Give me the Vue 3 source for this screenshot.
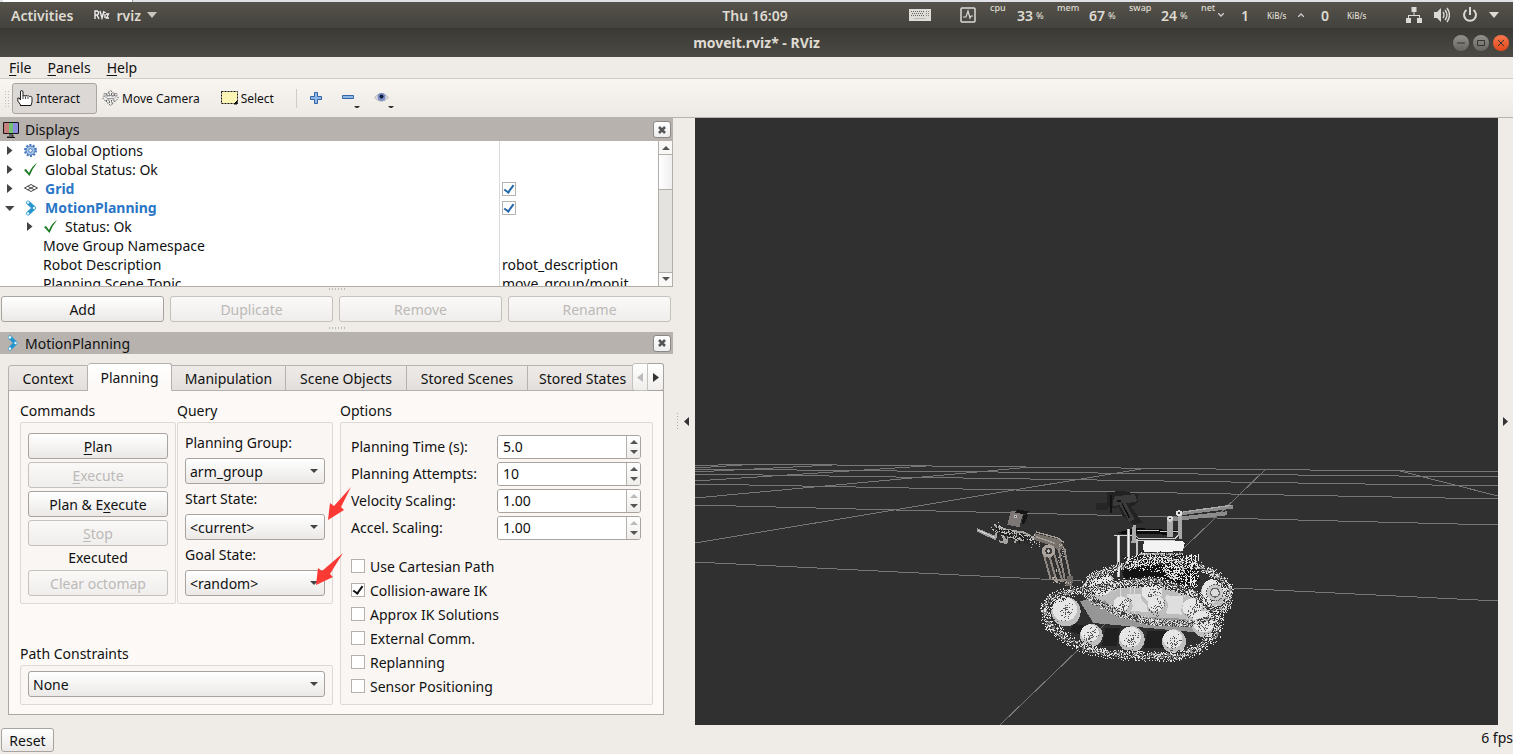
<script setup>
import { ref } from 'vue'

const menus = [['F', 'ile'], ['P', 'anels'], ['H', 'elp']]
const tree = [
  { label: 'Global Options', level: 1, arrow: 'right', icon: 'gear' },
  { label: 'Global Status: Ok', level: 1, arrow: 'right', icon: 'tick' },
  { label: 'Grid', level: 1, arrow: 'right', icon: 'grid', blue: true, check: true },
  { label: 'MotionPlanning', level: 1, arrow: 'down', icon: 'arm', blue: true, check: true },
  { label: 'Status: Ok', level: 2, arrow: 'right', icon: 'tick' },
  { label: 'Move Group Namespace', level: 3, value: '' },
  { label: 'Robot Description', level: 3, value: 'robot_description' },
  { label: 'Planning Scene Topic', level: 3, value: 'move_group/monit' }
]
const displayButtons = [['Add', true], ['Duplicate', false], ['Remove', false], ['Rename', false]]
const tabs = ['Context', 'Planning', 'Manipulation', 'Scene Objects', 'Stored Scenes', 'Stored States']
const activeTab = ref('Planning')
const queries = [
  { id: 'group', label: 'Planning Group:', value: 'arm_group' },
  { id: 'start', label: 'Start State:', value: '<current>' },
  { id: 'goal', label: 'Goal State:', value: '<random>' }
]
const spins = [
  { id: 'time', label: 'Planning Time (s):', value: '5.0', max: false },
  { id: 'attempts', label: 'Planning Attempts:', value: '10', max: false },
  { id: 'velocity', label: 'Velocity Scaling:', value: '1.00', max: true },
  { id: 'accel', label: 'Accel. Scaling:', value: '1.00', max: true }
]
const options = ref([
  { label: 'Use Cartesian Path', on: false },
  { label: 'Collision-aware IK', on: true },
  { label: 'Approx IK Solutions', on: false },
  { label: 'External Comm.', on: false },
  { label: 'Replanning', on: false },
  { label: 'Sensor Positioning', on: false }
])

const gridLines = [
  'M695 562L1081 581', 'M1233 588L1498 601', 'M695 505L1498 525', 'M695 484L1498 499',
  'M695 474L1498 486', 'M695 469L1498 477', 'M742 464L1498 472', 'M695 466L742 464',
  'M695 543L1141 469', 'M695 498L1031 467', 'M695 481L926 466', 'M695 472L832 465',
  'M695 468L758 464', 'M1265 470L1000 725', 'M1400 471L1498 496'
]

// Scatters 3-unit squares along a polyline to give a track its studded texture.
function scatter(points, spread, count, seed) {
  let s = seed * 7919
  const rnd = () => (s = (s * 16807) % 2147483647) / 2147483647
  const lens = []
  let total = 0
  for (let i = 1; i < points.length; i++) {
    const l = Math.hypot(points[i][0] - points[i - 1][0], points[i][1] - points[i - 1][1])
    lens.push(l)
    total += l
  }
  let d = ''
  for (let n = 0; n < count; n++) {
    let t = rnd() * total
    let i = 0
    while (i < lens.length - 1 && t > lens[i]) t -= lens[i++]
    const [x0, y0] = points[i]
    const [x1, y1] = points[i + 1]
    const k = t / lens[i]
    const x = Math.round((x0 + (x1 - x0) * k + (rnd() - 0.5) * spread) / 3) * 3
    const y = Math.round((y0 + (y1 - y0) * k + (rnd() - 0.5) * spread) / 3) * 3
    d += `M${x} ${y}h3v3h-3z`
  }
  return d
}
const nearTrack = [[380, 355], [320, 368], [270, 385], [252, 420], [265, 460], [310, 500], [380, 537], [450, 552], [560, 558], [650, 560], [715, 535], [765, 495], [778, 450], [745, 405], [700, 370], [650, 348], [580, 332], [480, 340], [380, 360]]
const farTrack = [[375, 350], [400, 318], [470, 292], [560, 272], [640, 268], [720, 290], [775, 318], [808, 360], [803, 400], [780, 425]]
const sagTrack = [[370, 365], [420, 402], [490, 434], [560, 452], [640, 460], [700, 458], [770, 440]]
const clusters = [
  [[500, 275], [690, 300]], [[530, 260], [700, 270]], [[700, 290], [690, 340]], [[620, 300], [680, 320]]
]
const pathOf = pts => 'M' + pts.map(p => p.join(' ')).join('L')
const wheels = [
  [318, 425, 44], [428, 350, 42], [488, 408, 30], [580, 372, 38], [592, 408, 32], [700, 420, 36],
  [394, 496, 34], [515, 508, 39], [642, 514, 36], [645, 296, 32], [735, 462, 40], [765, 368, 42]
]
</script>

<template>
  <div class="desktop">
    <div class="strip"><i></i></div>
    <header class="topbar">
      <div class="top-left">
        <button class="plain">Activities</button>
        <button class="plain app">
          <svg width="16" height="12" viewBox="0 0 16 12" fill="none" stroke="#eee" stroke-width="1.4"><path d="M1 10V2h2.500q2 1.800 0 4H1M3 6l2 4M6 2l2 7 2-7M11 5v4M12 5h2.500l-2 4H15M11 3v1" /></svg>
          rviz
          <svg width="10" height="6" viewBox="0 0 10 6"><path d="M0 0h10L5 6z" fill="#c9c6bf" /></svg>
        </button>
      </div>
      <time>Thu 16:09</time>
      <div class="top-right">
        <svg class="kbd" width="22" height="14" viewBox="0 0 22 14"><path d="M0 1h22v12H0z" fill="#dedcd7" /><path d="M2 3.500h13M3 5.500h12M2 7.500h13" stroke="#66645f" stroke-dasharray="1 1" /><path d="M17 3.500h3M17 5.500h3M17 7.500h3" stroke="#8b8984" stroke-dasharray="1 1" /><path d="M5 10.500h11" stroke="#bbb" /></svg>
        <svg class="load" width="16" height="16" viewBox="0 0 16 16" fill="none" stroke="#dcdad5" stroke-width="1.500"><rect x="1" y="1" width="14" height="14" rx="1" /><path d="M3 10h3l2-6 2 7 1-2h2" stroke-width="1.200" /></svg>
        <span class="lab cpu">cpu</span><b>33</b><small class="u1">%</small>
        <span class="lab mem">mem</span><b>67</b><small class="u1">%</small>
        <span class="lab swap">swap</span><b>24</b><small class="u1">%</small>
        <span class="lab net">net</span>
        <span class="dir"><svg width="6" height="4" viewBox="0 0 6 4"><path d="M0 0l3 3 3-3" fill="none" stroke="#ccc" stroke-width="1.300" /></svg></span>
        <b class="rate">1</b><small class="u2">KiB/s</small>
        <span class="dir"><svg width="6" height="4" viewBox="0 0 6 4"><path d="M0 4l3-3 3 3" fill="none" stroke="#ccc" stroke-width="1.300" /></svg></span>
        <b class="rate">0</b><small class="u3">KiB/s</small>
        <svg class="sys" width="16" height="16" viewBox="0 0 16 16" fill="#dcdad5"><path d="M5.500 0h5v5h-2v3H14v3h2v5h-5v-5h2V9H3v2h2v5H0v-5h2V8h5.500V5h-2z" /></svg>
        <svg class="sys" width="16" height="16" viewBox="0 0 16 16"><path d="M0 5h3l4-4v14l-4-4H0z" fill="#dcdad5" /><path d="M9 5q2 3 0 6M11 3q4 5 0 10M13 1q5 7 0 14" fill="none" stroke="#dcdad5" stroke-width="1.400" /></svg>
        <svg class="pow" width="16" height="16" viewBox="0 0 16 16" fill="none" stroke="#dcdad5" stroke-width="2"><path d="M4.500 3a6 6 0 1 0 7 0M8 0v8" /></svg>
        <svg width="10" height="6" viewBox="0 0 10 6"><path d="M0 0h10L5 6z" fill="#dcdad5" /></svg>
      </div>
    </header>
    <div class="titlebar">
      <span></span>
      <h1>moveit.rviz* - RViz</h1>
      <div class="winbtns">
        <button aria-label="Minimize"><svg viewBox="0 0 16 16"><path d="M4 8h8" /></svg></button>
        <button aria-label="Maximize"><svg viewBox="0 0 16 16"><path d="M4.500 5.500h7v5h-7z" /></svg></button>
        <button class="close" aria-label="Close window"><svg viewBox="0 0 16 16"><path d="M5 5l6 6M11 5l-6 6" /></svg></button>
      </div>
    </div>
    <nav class="menu">
      <button v-for="m in menus" :key="m[1]" class="plain"><u>{{ m[0] }}</u>{{ m[1] }}</button>
    </nav>
    <div class="toolbar">
      <i class="grip"></i>
      <button class="tool on">
        <svg width="16" height="16" viewBox="0 0 16 16"><path d="M3.500 10V2q0-1.500 1.200-1.500T6 2v4q1-1 2 0 1-1 2.200 0 1-.8 2.200.5 1.600-.7 2.600.8V12l-1 3.500H4L.8 11V8q1.500-1 2.700 2" fill="#fff" stroke="#222" /><path d="M6 6v3M8.500 6.500V9M11 7v2" stroke="#444" /><path d="M3 15.500h11" stroke="#111" /></svg>
        Interact
      </button>
      <button class="tool">
        <svg width="17" height="16" viewBox="0 0 17 16" fill="#eee" stroke="#666"><path d="M8.500.500L11.500 3h-2v3h3V4L16.500 8l-4 4v-2h-3v3h2l-3 2.500-3-2.500h2v-3h-3v2L.5 8l4-4v2h3V3h-2z" stroke-dasharray="2 1" /><path d="M2 3.500h3v2h7v-2h3v2l-3 3H5l-3-3z" fill="none" stroke="#888" stroke-width=".8" /></svg>
        Move Camera
      </button>
      <button class="tool select-tool">
        <svg width="17" height="14" viewBox="0 0 17 14"><path d="M.5.500h16v12H.500z" fill="#fdf5b5" stroke="#111" stroke-dasharray="2 1" /><path d="M13 13l3-3v3z" fill="#111" stroke="#111" /></svg>
        Select
      </button>
      <i class="sep"></i>
      <button class="tool ic" aria-label="Add tool"><svg width="12" height="12" viewBox="0 0 12 12"><path d="M4.500.5h3v4h4v3h-4v4h-3v-4h-4v-3h4z" fill="#8fb8e6" stroke="#3465a4" /></svg></button>
      <button class="tool ic drop" aria-label="Remove tool"><svg width="18" height="20" viewBox="0 0 18 20"><path d="M.5 7.500h11v3H.500z" fill="#8fb8e6" stroke="#3465a4" /><path d="M12 18h6l-3 3z" fill="#333" /></svg></button>
      <button class="tool ic drop" aria-label="Visibility"><svg width="20" height="20" viewBox="0 0 20 20"><path d="M.5 9.500q7-8 14 0-7 7.500-14 0z" fill="#e4e4e4" stroke="#b5b5b5" /><circle cx="7.500" cy="9" r="4" fill="#7c8fc6" /><circle cx="7.500" cy="8.500" r="2" fill="#131b3c" /><path d="M14 18h6l-3 3z" fill="#333" /></svg></button>
    </div>

    <main>
      <section class="left">
        <div class="dock-title">
          <svg width="18" height="18" viewBox="0 0 18 18"><path d="M2 2h5v10H2z" fill="#c97e7e" /><path d="M7 2h4v10H7z" fill="#72c274" /><path d="M11 2h5v10h-5z" fill="#8b8bdc" /><path d="M1.500 1.500h15v11h-15zM7 14h4v2H5M5 16.500h8" fill="none" stroke="#151515" /></svg>
          <h2>Displays</h2>
          <button class="x" aria-label="Close Displays"><svg width="8" height="8" viewBox="0 0 8 8"><path d="M1 1l6 6M7 1L1 7" stroke="#555" stroke-width="2.600" /></svg></button>
        </div>
        <div class="tree-wrap">
          <div class="tree" role="tree">
            <div v-for="r in tree" :key="r.label" class="row" role="treeitem">
              <div class="name" :class="['l' + r.level, { blue: r.blue }]">
                <svg v-if="r.arrow === 'right'" class="tw" width="10" height="10" viewBox="0 0 10 10"><path d="M2 0v9l5.500-4.500z" fill="#444" /></svg>
                <svg v-else-if="r.arrow === 'down'" class="tw" width="10" height="10" viewBox="0 0 10 10"><path d="M0 3h9.500L4.700 8z" fill="#444" /></svg>
                <svg v-if="r.icon === 'gear'" class="ti" viewBox="0 0 16 16" fill="none"><circle cx="7.500" cy="7.500" r="5.500" stroke="#4877b8" stroke-width="2" stroke-dasharray="2 1.450" /><circle cx="7.500" cy="7.500" r="4.500" fill="#a9c6ea" stroke="#4877b8" /><circle cx="7.500" cy="7.500" r="1.800" fill="#fff" stroke="#4877b8" /></svg>
                <svg v-else-if="r.icon === 'tick'" class="ti" viewBox="0 0 16 16"><path d="M1 8l2-1 3 4Q9 4 14 1 9 7 6.500 14z" fill="#197a22" /></svg>
                <svg v-else-if="r.icon === 'grid'" class="ti" viewBox="0 0 16 16" fill="none" stroke="#444"><path d="M1.500 7L8 3.500 14.500 7 8 10.500zM4.700 5.300l6.600 3.500M11.300 5.300L4.700 8.800" /></svg>
                <svg v-else-if="r.icon === 'arm'" class="ti" viewBox="0 0 16 16"><path d="M5 2.500L11 8l-6 5.500" fill="none" stroke="#2494cf" stroke-width="3.800" stroke-linecap="round" stroke-linejoin="round" /><g fill="#e8f7ff"><circle cx="5" cy="2.500" r="1.300" /><circle cx="11" cy="8" r="1.200" /><circle cx="5" cy="13.500" r="1.300" /></g></svg>
                <span>{{ r.label }}</span>
              </div>
              <div class="val">
                <input v-if="r.check" type="checkbox" class="box bluebox" checked :aria-label="r.label" />
                <template v-else>{{ r.value }}</template>
              </div>
            </div>
          </div>
          <div class="scroll">
            <button aria-label="Scroll up"><svg width="8" height="5" viewBox="0 0 8 5"><path d="M0 5h8L4 1z" fill="#555" /></svg></button>
            <i class="thumb"></i><i class="trough"></i>
            <button aria-label="Scroll down"><svg width="8" height="5" viewBox="0 0 8 5"><path d="M0 0h8L4 4z" fill="#555" /></svg></button>
          </div>
        </div>
        <i class="hdots"></i>
        <div class="btnrow">
          <button v-for="b in displayButtons" :key="b[0]" class="btn" :disabled="!b[1]">{{ b[0] }}</button>
        </div>
        <i class="hdots second"></i>
        <div class="dock-title motion">
          <svg width="18" height="18" viewBox="0 0 16 16"><path d="M7 3l5 5-5 5" fill="none" stroke="#2494cf" stroke-width="3.400" stroke-linecap="round" stroke-linejoin="round" /><g fill="#e8f7ff"><circle cx="7" cy="3" r="1.200" /><circle cx="12" cy="8" r="1.100" /><circle cx="7" cy="13" r="1.200" /></g></svg>
          <h2>MotionPlanning</h2>
          <button class="x" aria-label="Close MotionPlanning"><svg width="8" height="8" viewBox="0 0 8 8"><path d="M1 1l6 6M7 1L1 7" stroke="#555" stroke-width="2.600" /></svg></button>
        </div>
        <div class="motion-body">
          <div class="tabs" role="tablist">
            <button v-for="t in tabs" :key="t" role="tab" class="tab" :class="{ active: t === activeTab }" :aria-selected="t === activeTab" @click="activeTab = t">{{ t }}</button>
            <button class="nav first" disabled aria-label="Scroll tabs left"><svg width="6" height="9" viewBox="0 0 6 9"><path d="M6 0v9L0 4.500z" fill="#bbb" /></svg></button>
            <button class="nav" aria-label="Scroll tabs right"><svg width="6" height="9" viewBox="0 0 6 9"><path d="M0 0v9l6-4.500z" fill="#333" /></svg></button>
          </div>
          <div class="pane">
            <div class="columns">
              <div class="col-left">
                <div class="pair">
                  <section>
                    <h3>Commands</h3>
                    <div class="frame commands">
                      <button class="btn"><u>P</u>lan</button>
                      <button class="btn" disabled><u>E</u>xecute</button>
                      <button class="btn">Plan &amp; E<u>x</u>ecute</button>
                      <button class="btn" disabled><u>S</u>top</button>
                      <output>Executed</output>
                      <button class="btn" disabled>Clear octomap</button>
                    </div>
                  </section>
                  <section>
                    <h3>Query</h3>
                    <div class="frame query">
                      <template v-for="q in queries" :key="q.id">
                        <label :for="q.id">{{ q.label }}</label>
                        <div class="combo"><select :id="q.id"><option>{{ q.value }}</option></select></div>
                      </template>
                    </div>
                  </section>
                </div>
                <section>
                  <h3><label for="constraints">Path Constraints</label></h3>
                  <div class="frame constraints">
                    <div class="combo"><select id="constraints"><option>None</option></select></div>
                  </div>
                </section>
              </div>
              <section class="opts">
                <h3>Options</h3>
                <div class="frame options">
                  <div v-for="s in spins" :key="s.id" class="spinrow">
                    <label :for="s.id">{{ s.label }}</label>
                    <div class="spin">
                      <input :id="s.id" type="text" :value="s.value" />
                      <div class="steps">
                        <button :disabled="s.max" :aria-label="'Increase ' + s.label"><svg width="8" height="5" viewBox="0 0 8 5"><path d="M0 5h8L4 1z" fill="currentColor" /></svg></button>
                        <button :aria-label="'Decrease ' + s.label"><svg width="8" height="5" viewBox="0 0 8 5"><path d="M0 0h8L4 4z" fill="currentColor" /></svg></button>
                      </div>
                    </div>
                  </div>
                  <div class="checks">
                    <label v-for="o in options" :key="o.label"><input v-model="o.on" type="checkbox" class="box" />{{ o.label }}</label>
                  </div>
                </div>
              </section>
            </div>
            <svg class="arrow a1" width="24" height="34" viewBox="0 0 24 34"><path d="M0 33L2 16l4 3L23 0 13 20l3 3z" fill="#fb3a36" /></svg>
            <svg class="arrow a2" width="28" height="32" viewBox="0 0 28 32"><path d="M0 32L2 15l4 3L27 0 14 21l3 3z" fill="#fb3a36" /></svg>
          </div>
        </div>
      </section>

      <div class="gutter"><i class="vdots"></i><svg width="5" height="9" viewBox="0 0 5 9"><path d="M5 0v9L0 4.500z" fill="#333" /></svg></div>
      <div class="view">
        <svg viewBox="695 118 803 607" preserveAspectRatio="xMidYMid slice" shape-rendering="crispEdges" aria-label="3D view">
          <path v-for="g in gridLines" :key="g" :d="g" stroke="#777" fill="none" />
          <svg x="960" y="470" width="290" height="210" viewBox="0 0 870 630">
            <!-- arm -->
            <path d="M52 175l58 24-2 12-58-26z" fill="#9c9c9c" />
            <path d="M54 180l55 25" stroke="#d4d4d4" stroke-width="3" />
            <path d="M152 124l40-4-14 52-36-8z" fill="#7d7875" />
            <path d="M172 118l34 6-6 10-34-6zM190 134l14 2-12 26-6 0z" fill="#151515" />
            <circle cx="166" cy="140" r="5" fill="#bbb" /><circle cx="166" cy="140" r="2" fill="#333" />
            <path d="M102 165l40 15 52 8 30 18M112 180l-6 26M130 182l4 40M126 196l16 20M146 184l-6 36M170 186l-4 32M118 214l24 4M150 200l44 12" stroke="#a5a3a0" stroke-width="6" fill="none" />
            <path d="M108 172l28 26M140 190l30 16M178 196l20 14M150 180l6 14" stroke="#1c1c1c" stroke-width="5" fill="none" />
            <path :d="scatter([[105, 168], [150, 195], [210, 200], [225, 222]], 26, 110, 17)" fill="#c8c6c2" />
            <path :d="scatter([[105, 175], [150, 200], [215, 212]], 28, 70, 99)" fill="#1a1a1a" />
            <path d="M225 190l72 18 16 22-14 14-22-16-54-18z" fill="#77716c" />
            <path d="M228 186l66 18 18 14M228 200l56 20" stroke="#a69f98" stroke-width="4" fill="none" />
            <path d="M254 258l18 68 20 14-20-88z" fill="#3c3a39" />
            <path d="M252 256l20 72M268 258l20 70M282 250l26 86M296 236l18 90M312 234l18 84M276 328l50 4" stroke="#8d8680" stroke-width="6" fill="none" />
            <circle cx="266" cy="243" r="20" fill="#aaa39d" /><circle cx="266" cy="243" r="10" fill="#3c3b3a" /><circle cx="266" cy="243" r="5" fill="#bbb" />
            <path d="M322 318h18l-4 32-20-4z" fill="#6d6864" />
            <path :d="scatter([[296, 215], [310, 240], [280, 330], [330, 340]], 14, 60, 5)" fill="#b5afa8" />
            <!-- camera head -->
            <path d="M408 98h36v22h-36z" fill="#262626" />
            <path d="M442 68l38-6 56 10-4 26-18 14 34 46-26 6-34-26-12-28-14 6-22-8z" fill="#222" />
            <path d="M462 80l62-8 8 22-34 6 26 48-16 8-30-52-20 6z" fill="#3b3b3b" />
            <path d="M452 76v54M486 100l22 44M470 92h14" stroke="#121212" stroke-width="5" />
            <!-- deck and exhausts -->
            <path d="M462 190l68-16 136 8-40 12z" fill="#0c0c0c" />
            <path d="M462 196h64l10 10h108l22-22M530 180l136 6M526 210h120" stroke="#d2d2d2" stroke-width="3" fill="none" />
            <path d="M660 128l158-24v12l-158 20zM636 142l164-18v12l-164 18z" fill="#8b8b8b" />
            <path d="M668 126l146-20" stroke="#aaa" stroke-width="4" />
            <path d="M622 142h18v60h-18zM652 126h14v82h-10zM518 166h10v54h-14z" fill="#a9a9a9" />
            <circle cx="630" cy="146" r="9" fill="#d5d5d5" /><circle cx="657" cy="130" r="9" fill="#e4e4e4" />
            <circle cx="630" cy="146" r="3" fill="#333" /><circle cx="657" cy="130" r="3" fill="#333" />
            <path d="M472 194h9v128h-9zM501 176h8v148h-8zM527 206h7v116h-7z" fill="#c5c5c5" />
            <path d="M474 194v128M504 176v148" stroke="#f4f4f4" stroke-width="3" />
            <path d="M552 214h116l6 6-6 24-114 2-6-8z" fill="#f3f3f3" />
            <path d="M540 252h130" stroke="#a0a0a0" stroke-width="5" />
            <!-- chassis -->
            <path d="M480 285h210l30 45-50 20H500z" fill="#141414" />
            <path d="M360 395l60-20 330 60-20 54-330-30z" fill="#969696" />
            <path d="M420 380l60-28 120-10 100 40 50 45-60 20-130-6-100-28z" fill="#bcbcbc" />
            <path d="M500 372l170 6-4 56-160-12z" fill="#dedede" />
            <path d="M340 462l34 4-14 28-30-10zM436 474h44l-10 54h-44zM562 482h56l-6 52h-60z" fill="#202020" />
            <path d="M480 336v60M522 326v116M510 320v50" stroke="#d9d9d9" stroke-width="3" />
            <g v-for="(w, i) in wheels" :key="i">
              <ellipse :cx="w[0]" :cy="w[1]" :rx="w[2]" :ry="w[2]" fill="#bebebe" />
              <ellipse :cx="w[0] - 4" :cy="w[1] - 7" :rx="w[2] - 7" :ry="w[2] - 8" fill="#e6e6e6" />
              <path :d="scatter([[w[0] - 14, w[1] + 18], [w[0] + 12, w[1] - 18]], 28, 44, 31 + i * 57)" fill="#555" />
            </g>
            <circle cx="765" cy="368" r="25" fill="#c9c9c9" stroke="#555" stroke-width="3" stroke-dasharray="5 3" />
            <circle cx="765" cy="368" r="13" fill="#ddd" stroke="#666" stroke-width="4" />
            <!-- tracks -->
            <g fill="none" stroke-linejoin="round">
              <path :d="pathOf(farTrack)" stroke="#8e8e8e" stroke-width="17" />
              <path :d="pathOf(sagTrack)" stroke="#9d9d9d" stroke-width="15" />
              <path :d="pathOf(nearTrack)" stroke="#858585" stroke-width="18" />
            </g>
            <path :d="scatter(farTrack, 26, 950, 7)" fill="#e2e2e2" />
            <path :d="scatter(farTrack, 28, 650, 43)" fill="#303030" />
            <path :d="scatter(sagTrack, 20, 600, 71)" fill="#e2e2e2" />
            <path :d="scatter(sagTrack, 20, 420, 23)" fill="#3c3c3c" />
            <path :d="scatter(nearTrack, 29, 2600, 11)" fill="#e4e4e4" />
            <path :d="scatter(nearTrack, 31, 1900, 3)" fill="#303030" />
            <template v-for="(c, i) in clusters" :key="i">
              <path :d="scatter(c, 36, 210, 101 + i * 13)" fill="#e8e8e8" />
              <path :d="scatter(c, 40, 130, 211 + i * 17)" fill="#161616" />
            </template>
            <path d="M680 255v26M694 252v22M706 254v24M714 252v20M690 310v34M704 320v26" stroke="#eee" stroke-width="3" />
          </svg>
        </svg>
      </div>
      <div class="rgutter"><svg width="5" height="9" viewBox="0 0 5 9"><path d="M0 0v9l5-4.500z" fill="#333" /></svg></div>
    </main>
    <footer>
      <button class="btn reset">Reset</button>
      <span>6 fps</span>
    </footer>
  </div>
</template>

<style>
html, body { margin: 0; background: #efebe7; }
</style>

<style scoped>
* { box-sizing: border-box; }
.desktop { min-height: 100vh; display: flex; flex-direction: column; background: #efebe7; color: #111; font: 14px/19px "Noto Sans", sans-serif; }
button, input, select { font: inherit; color: inherit; margin: 0; padding: 0; }
svg { display: block; flex: none; }
h1, h2, h3 { margin: 0; font-weight: 400; font-size: 14px; }
i { display: block; }
u { text-underline-offset: 2px; }
.plain { border: 0; background: none; }
.strip { height: 2px; background: #dfe0e8; }
.strip i { width: 130px; height: 2px; margin-left: 3px; background: #fff; border-right: 1px solid #999; }
.topbar { height: 26px; display: grid; grid-template-columns: 1fr auto 1fr; align-items: center; background: linear-gradient(#56534b, #43423d); color: #dfdbd2; font-weight: 600; padding: 0 14px 0 11px; }
.top-left, .top-right { display: flex; align-items: center; }
.top-left { gap: 21px; }
.app { display: flex; align-items: center; gap: 6px; }
.top-right { justify-content: flex-end; align-self: stretch; }
.kbd { margin-right: 29px; }
.load { margin-right: 14px; }
.lab { font-size: 9px; font-weight: 500; align-self: flex-start; line-height: 12px; }
.cpu { width: 27px; }
.mem, .swap { width: 32px; }
.net { width: 17px; }
.topbar b { width: 19px; font-weight: 600; font-size: 14px; }
.topbar b.rate { width: 26px; }
.topbar small { font-size: 8px; font-weight: 500; white-space: nowrap; }
.dir { width: 23px; }
.topbar .u1 { width: 21px; font-size: 9px; }
.u2 { width: 31px; }
.u3 { width: 59px; }
.sys { margin-right: 12px; }
.pow { margin-right: 11px; }
.titlebar { height: 29px; display: grid; grid-template-columns: 1fr auto 1fr; align-items: center; background: linear-gradient(#3a3934, #4b4a45); color: #dfdbd2; padding: 0 4px; }
.titlebar h1 { font-size: 14px; font-weight: 700; }
.winbtns { display: flex; justify-content: flex-end; gap: 4px; }
.winbtns button { width: 16px; height: 16px; border: 0; border-radius: 50%; background: linear-gradient(#92918a, #66655f); }
.winbtns .close { background: linear-gradient(#f8764c, #e0481b); }
.winbtns path { fill: none; stroke: #35342f; }
.menu { height: 22px; display: flex; gap: 16px; padding-left: 9px; border-bottom: 1px solid #cfcbc7; }
.toolbar { height: 39px; display: flex; align-items: center; background: linear-gradient(#f9f6f2, #edeae6); border-bottom: 1px solid #b8b3ae; padding-left: 4px; font-size: 12px; }
.grip { width: 5px; height: 17px; margin-right: 3px; background: radial-gradient(circle, #bbb 1px, transparent 1px) 0 0 / 3px 3px; }
.tool { display: flex; align-items: center; gap: 3px; height: 31px; border: 1px solid transparent; border-radius: 3px; background: none; padding: 0 4px; white-space: nowrap; }
.tool.on { width: 85px; background: #dcd8d5; border-color: #aaa5a0; }
.select-tool { margin-left: 11px; }
.sep { width: 1px; height: 19px; background: #ccc; margin: 0 8px 0 17px; }
.ic { margin-right: 8px; }
.drop { margin-right: 0; padding: 0 6px; }
main { flex: 1; display: flex; min-height: 607px; }
.left { width: 673px; flex: none; display: flex; flex-direction: column; }
.dock-title { height: 23px; display: flex; align-items: center; gap: 5px; padding: 0 2px; background: #b7b2ae; }
.dock-title h2 { flex: 1; }
.motion { height: 22px; }
.x { width: 18px; height: 17px; display: flex; align-items: center; justify-content: center; border: 1px solid #8e8984; border-radius: 3px; background: linear-gradient(#fff, #eee); }
.tree-wrap { height: 146px; display: flex; background: #fff; border-bottom: 1px solid #b1ada9; }
.tree { flex: 1; height: 145px; overflow: hidden; }
.row { display: grid; grid-template-columns: 499px 1fr; height: 19px; }
.name { display: flex; align-items: center; padding-left: 5px; }
.l2 { padding-left: 25px; }
.l3 { padding-left: 43px; }
.tw { margin-right: 8px; }
.ti { width: 16px; height: 16px; margin-right: 6px; }
.blue { color: #2a76c6; font-weight: 700; }
.val { border-left: 1px solid #d9d9d9; padding-left: 2px; display: flex; align-items: center; white-space: nowrap; }
.box { appearance: none; flex: none; width: 14px; height: 14px; border: 1px solid #b5b1ad; background: #fff; display: grid; place-items: center; }
.box:checked::after { content: ""; width: 4px; height: 8px; margin-bottom: 2px; border: solid #111; border-width: 0 2px 2px 0; transform: rotate(36deg); }
.bluebox:checked::after { border-color: #2267aa; }
.scroll { width: 15px; display: flex; flex-direction: column; border: solid #b1ada9; border-width: 0 1px; }
.scroll button { height: 14px; border: 0; border-bottom: 1px solid #b1ada9; background: #f9f8f7; display: grid; place-items: center; }
.scroll button:last-child { border: 0; border-top: 1px solid #b1ada9; }
.thumb { height: 35px; background: linear-gradient(90deg, #fff, #efefef); border-bottom: 1px solid #b1ada9; }
.trough { flex: 1; background: #e4e3df; }
.hdots { width: 16px; height: 2px; margin: 1px auto 6px; background: repeating-linear-gradient(90deg, #bbb 0 1px, transparent 1px 3px); }
.hdots.second { margin: 5px auto 3px; }
.btn { height: 26px; flex: none; border: 1px solid #a8a39e; border-radius: 3px; background: linear-gradient(#fff, #ebe9e7); }
.btn:disabled { color: #bcb9b6; border-color: #c5c1bd; background: linear-gradient(#faf9f8, #efeeec); }
.btnrow { display: grid; grid-template-columns: repeat(4, 1fr); gap: 6px; padding: 0 2px 0 1px; }
.motion-body { padding: 9px 9px 10px 8px; flex: 1; display: flex; flex-direction: column; }
.tabs { display: flex; align-items: flex-end; height: 28px; position: relative; z-index: 1; margin-bottom: -1px; }
.tab { height: 26px; border: 1px solid #b5b1ad; border-left: 0; background: linear-gradient(#edeae7, #e3dfdc); white-space: nowrap; overflow: hidden; flex: 0 0 114px; }
.tab:first-child { flex-basis: 80px; border-left: 1px solid #b5b1ad; border-top-left-radius: 3px; }
.tab.active { height: 28px; flex-basis: 84px; border-bottom-color: #fcf9f6; background: linear-gradient(#fff, #fcf9f6); border-radius: 3px 3px 0 0; }
.tab:nth-child(4), .tab:nth-child(5) { flex-basis: 121px; }
.tab:nth-child(6) { flex: 1 1 105px; border-right: 0; text-align: left; padding-left: 11px; }
.nav { width: 16px; height: 28px; flex: none; border: 1px solid #a8a39e; border-left-width: 0; border-radius: 0 3px 3px 0; background: linear-gradient(#fff, #f0eeec); display: grid; place-items: center; }
.nav.first { border: 1px solid #c5c1bd; border-radius: 3px 0 0 3px; }
.pane { flex: 1; position: relative; background: #fcf9f6; border: 1px solid #aaa6a2; padding: 9px 10px; }
.columns { display: grid; grid-template-columns: 314px 1fr; gap: 7px; height: 100%; }
.col-left { display: flex; flex-direction: column; justify-content: space-between; padding-left: 1px; }
.pair { display: grid; grid-template-columns: 1fr 1fr; gap: 1px; }
h3 { height: 22px; line-height: 21px; }
.frame { border: 1px solid #ddd9d5; border-radius: 2px; background: #f9f6f3; }
.commands { display: flex; flex-direction: column; gap: 3px; padding: 10px 7px 7px; }
.commands output { height: 18px; line-height: 18px; text-align: center; }
.query { height: 182px; padding: 7px; }
.query label { display: block; height: 28px; line-height: 26px; }
.combo { position: relative; height: 28px; }
.combo::after { content: ""; position: absolute; right: 7px; top: 11px; border: 4px solid transparent; border-top-color: #444; border-bottom: 0; pointer-events: none; }
.combo select { appearance: none; width: 100%; height: 26px; padding: 0 4px; border: 1px solid #a8a39e; border-radius: 3px; background: linear-gradient(#fff, #ebe9e7); }
.constraints { height: 40px; padding: 5px 7px; }
.opts { display: flex; flex-direction: column; }
.options { flex: 1; padding: 10px 10px 5px; }
.spinrow { display: flex; align-items: center; height: 27px; }
.spinrow label { width: 146px; white-space: nowrap; }
.spin { display: flex; width: 144px; height: 24px; border: 1px solid #a8a39e; border-radius: 3px; overflow: hidden; background: #fff; }
.spin input { flex: 1; min-width: 0; border: 0; padding: 0 5px; background: #fff; }
.steps { width: 14px; border-left: 1px solid #b5b1ad; background: linear-gradient(#fff, #efedeb); display: grid; }
.steps button { border: 0; background: none; color: #555; display: grid; place-items: center; }
.steps button:disabled { color: #bbb; }
.checks { margin-top: 13px; }
.checks label { display: flex; align-items: center; gap: 5px; height: 24px; }
.arrow { position: absolute; pointer-events: none; }
.a1 { left: 319px; top: 96px; }
.a2 { left: 307px; top: 162px; }
.gutter { width: 22px; display: flex; align-items: center; gap: 6px; padding-left: 4px; }
.vdots { width: 1px; height: 17px; background: repeating-linear-gradient(#aaa 0 1px, transparent 1px 3px); }
.view { flex: 1; position: relative; background: #303030; overflow: hidden; }
.view > svg { position: absolute; inset: 0; width: 100%; height: 100%; }
.rgutter { width: 15px; display: flex; align-items: center; justify-content: center; }
footer { height: 29px; display: flex; justify-content: space-between; align-items: flex-start; padding: 3px 0 0 1px; }
.reset { width: 53px; height: 24px; }
</style>
